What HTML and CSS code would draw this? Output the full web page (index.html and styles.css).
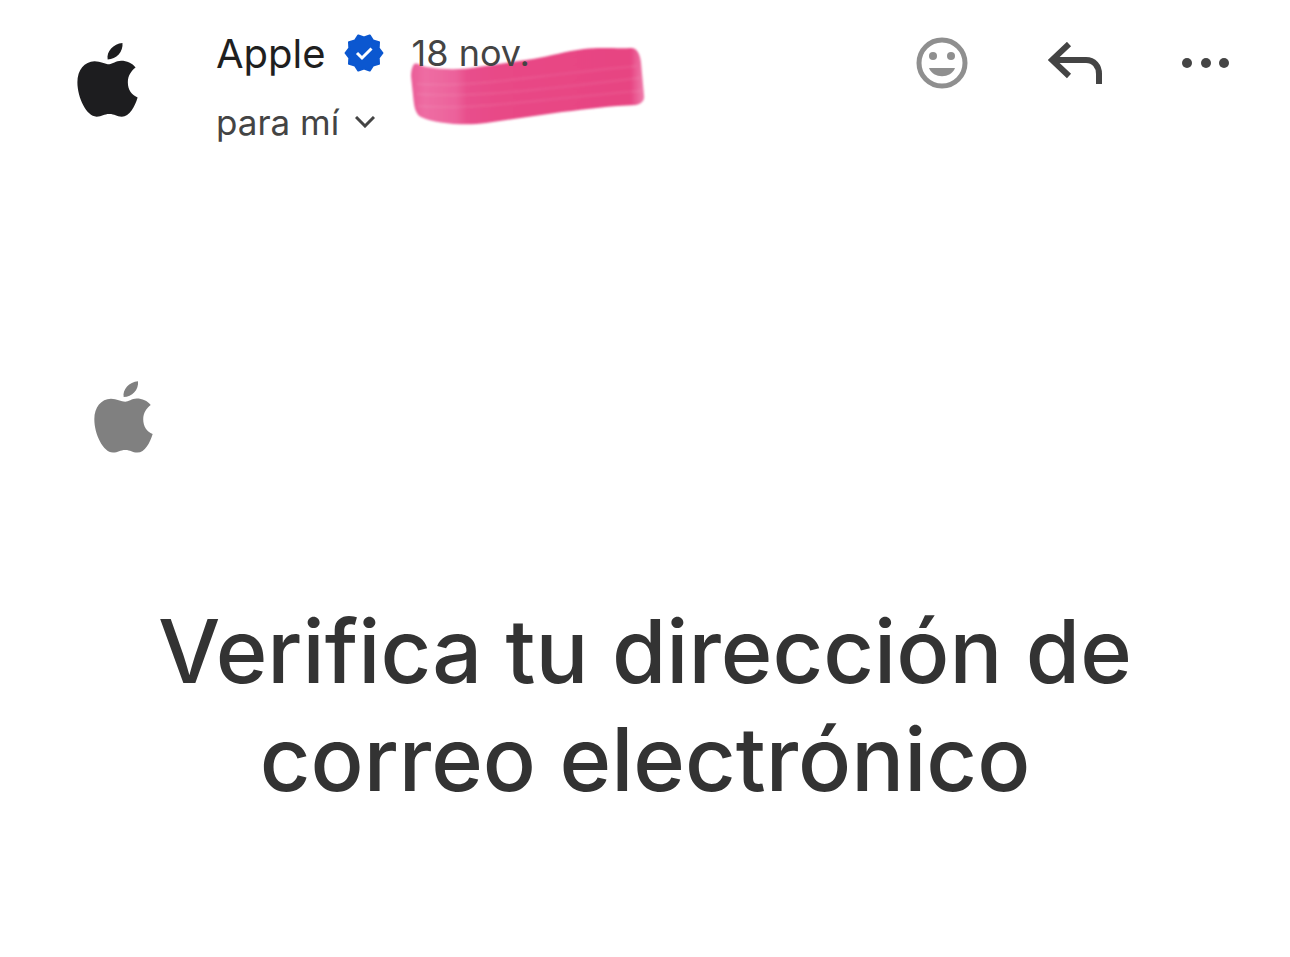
FILE: index.html
```html
<!DOCTYPE html>
<html lang="es">
<head>
<meta charset="utf-8">
<meta name="viewport" content="width=device-width, initial-scale=1">
<title>Verifica tu dirección de correo electrónico</title>
<link rel="stylesheet" href="styles.css">
</head>
<body>
<svg class="defs" aria-hidden="true">
  <symbol id="apple" viewBox="52 41 181 220">
    <path d="M148 104C135 104 122 95 104 95C74 96 53 120 53 158C53 203 80 260 110 260C126 260 132 252 148 252C164 252 169 260 185 260C208 260 224 230 232 203C214 196 203 180 203 158C203 138 213 124 226 114C216 101 200 94 183 94C168 94 157 104 148 104ZM143 90C139 66 160 43 187 41C190 66 169 90 143 90Z"/>
  </symbol>
</svg>
<header class="header">
  <svg class="avatar" role="img" aria-label="Apple"><use href="#apple"/></svg>
  <div class="sender">
    <div class="sender-line">
      <span class="name">Apple</span>
      <svg class="badge" viewBox="-20 -20 40 40" role="img" aria-label="Remitente verificado">
        <path class="badge-shape" d="M18.5 0L14.7 4.8L15 10.9L9.1 12.5L5.7 17.6L0 15.5L-5.7 17.6L-9.1 12.5L-15 10.9L-14.7 4.8L-18.5 0L-14.7-4.8L-15-10.9L-9.1-12.5L-5.7-17.6L0-15.5L5.7-17.6L9.1-12.5L15-10.9L14.7-4.8Z"/>
        <path class="badge-check" d="M-7 0L-2 5L7.5-4.5"/>
      </svg>
      <span class="date">
        <svg class="marker" viewBox="0 0 240 84" aria-hidden="true">
          <defs>
            <linearGradient id="ink" x1="0" x2="1" y1="0" y2="0">
              <stop offset="0" stop-color="#ea5c97"/>
              <stop offset=".06" stop-color="#ee6da3"/>
              <stop offset=".19" stop-color="#ec629b"/>
              <stop offset=".24" stop-color="#e84f8c"/>
              <stop offset=".4" stop-color="#e84886"/>
              <stop offset=".94" stop-color="#e74482"/>
              <stop offset="1" stop-color="#ef7dac"/>
            </linearGradient>
            <filter id="soft"><feGaussianBlur stdDeviation="1"/></filter>
          </defs>
          <g filter="url(#soft)">
            <path fill="url(#ink)" d="M8 19C11 17 15 21 21 22C38 25 55 25 72 22L127 14C145 11 160 6 178 4C195 2 212 4 225 3C231 3 234 9 235 17L238 50C239 56 235 59 230 60C204 61 182 64 156 67L80 78C61 81 29 79 15 72C9 69 8 61 7 50L5 31C5 26 6 22 8 19Z"/>
            <path fill="none" stroke="#fff" stroke-opacity=".06" stroke-width="3" d="M11 39C70 43 150 28 231 21M11 49C70 54 160 41 234 33M12 61C70 66 160 51 235 46"/>
          </g>
        </svg>
        <time class="date-text" datetime="11-18">18 nov.</time>
      </span>
    </div>
    <button class="recipient" type="button">
      <span>para mí</span>
      <svg class="chevron" viewBox="0 0 20 12" aria-hidden="true"><path d="M1 1L10 10L19 1"/></svg>
    </button>
  </div>
  <div class="actions">
    <button class="action action-muted" type="button" aria-label="Reaccionar">
      <svg width="52" height="52" viewBox="-26 -26 52 52">
        <circle r="23" fill="none" stroke="currentColor" stroke-width="5"/>
        <circle cx="-9" cy="-7" r="4" fill="currentColor"/>
        <circle cx="9" cy="-7" r="4" fill="currentColor"/>
        <path fill="currentColor" d="M-13 5H13C9 16-9 16-13 5Z"/>
      </svg>
    </button>
    <button class="action" type="button" aria-label="Responder">
      <svg width="54" height="42" viewBox="0 0 54 42" fill="none" stroke="currentColor" stroke-width="6">
        <path d="M21 2L4 18L21 34M4 18H38C46 18 51 24 51 32V42"/>
      </svg>
    </button>
    <button class="action" type="button" aria-label="Más opciones">
      <svg width="48" height="10" viewBox="0 0 48 10" fill="currentColor">
        <circle cx="5" cy="5" r="5"/><circle cx="24" cy="5" r="5"/><circle cx="42" cy="5" r="5"/>
      </svg>
    </button>
  </div>
</header>
<main class="message">
  <svg class="brand" role="img" aria-label="Apple"><use href="#apple"/></svg>
  <h1 class="title">Verifica tu dirección de correo electrónico</h1>
</main>
</body>
</html>
```
FILE: styles.css
```css
* {
  box-sizing: border-box;
}

body {
  margin: 0;
  background: #fff;
  color: #444;
  font-family: Inter, "Liberation Sans", sans-serif;
}

.defs {
  position: absolute;
  width: 0;
  height: 0;
}

button {
  padding: 0;
  border: 0;
  background: none;
  color: inherit;
  font: inherit;
  cursor: pointer;
}

.header {
  display: flex;
  align-items: flex-start;
  padding: 28px 60px 0 77px;
}

.avatar {
  flex: none;
  width: 61px;
  height: 74px;
  margin-top: 15px;
  fill: #1d1d1f;
}

.sender {
  display: flex;
  flex-direction: column;
  align-items: flex-start;
  gap: 20px;
  margin-left: 78px;
}

.sender-line {
  display: flex;
  align-items: center;
  height: 50px;
  white-space: nowrap;
}

.name {
  color: #1f1f1f;
  font-size: 40px;
}

.badge {
  width: 40px;
  height: 40px;
  margin: 0 28px 0 18px;
}

.badge-shape {
  fill: #0b57d0;
  stroke: #0b57d0;
  stroke-width: 2;
  stroke-linejoin: round;
}

.badge-check {
  fill: none;
  stroke: #fff;
  stroke-width: 3;
}

.date {
  position: relative;
  font-size: 36px;
}

.date-text {
  position: relative;
}

.marker {
  position: absolute;
  top: 14px;
  left: -6px;
  width: 240px;
  height: 84px;
  overflow: visible;
}

.recipient {
  display: flex;
  align-items: center;
  gap: 16px;
  font-size: 35px;
  line-height: 48px;
}

.chevron {
  width: 20px;
  height: 12px;
  fill: none;
  stroke: currentColor;
  stroke-width: 3;
}

.actions {
  display: flex;
  align-items: center;
  gap: 80px;
  height: 70px;
  margin-left: auto;
}

.action {
  display: flex;
}

.action-muted {
  color: #8f8f8f;
}

.message {
  padding: 235px 94px 160px;
}

.brand {
  display: block;
  width: 59px;
  height: 72px;
  fill: #808080;
}

.title {
  max-width: 1100px;
  margin: 144px auto 0;
  color: #333;
  font-size: 88px;
  font-weight: 500;
  line-height: 108px;
  text-align: center;
}
```
